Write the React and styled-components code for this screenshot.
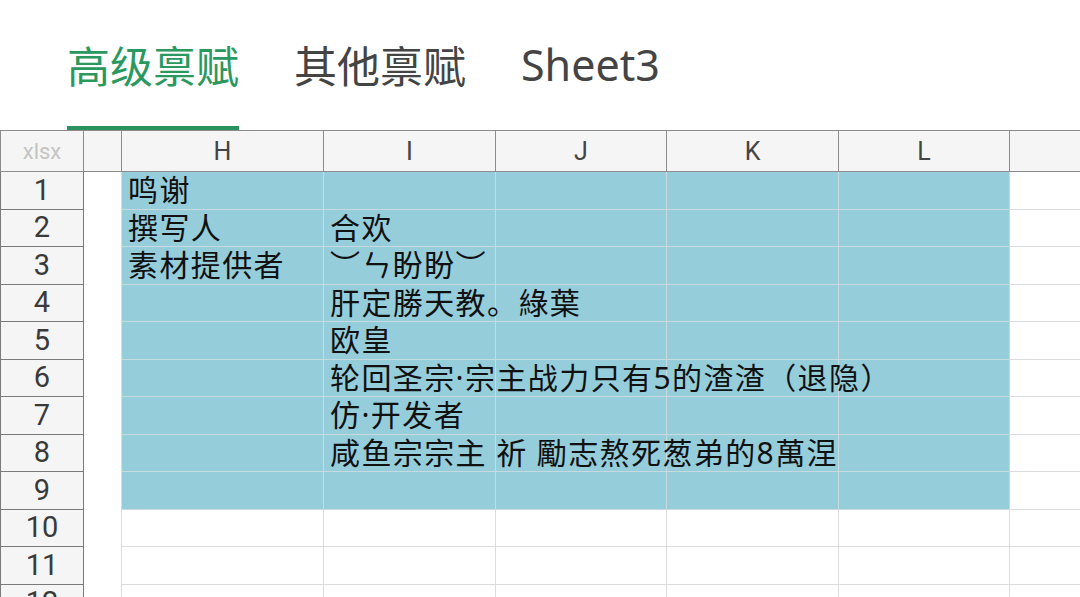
import React from 'react';
import styled, { createGlobalStyle } from 'styled-components';

const GlobalStyle = createGlobalStyle`
  html, body {
    margin: 0;
    padding: 0;
    background: #fff;
    overflow: hidden;
  }
  body {
    font-family: "Noto Sans", "Noto Sans CJK SC", sans-serif;
  }
`;

const tabs = ['高级禀赋', '其他禀赋', 'Sheet3'];

const columns = [
    { key: 'rowhead', width: 83 },
    { key: 'gap', width: 38 },
    { key: 'H', width: 202 },
    { key: 'I', width: 172 },
    { key: 'J', width: 171 },
    { key: 'K', width: 172 },
    { key: 'L', width: 171 },
    { key: 'M', width: 120 },
];

const letters = ['H', 'I', 'J', 'K', 'L'];

// H and I values per row, rows 1-9 are filled
const rows = [
    ['鸣谢', ''],
    ['撰写人', '合欢'],
    ['素材提供者', '︶ㄣ盼盼︶'],
    ['', '肝定勝天教。綠葉'],
    ['', '欧皇'],
    ['', '轮回圣宗·宗主战力只有5的渣渣（退隐）'],
    ['', '仿·开发者'],
    ['', '咸鱼宗宗主 祈 勵志熬死葱弟的8萬涅'],
    ['', ''],
    ['', ''],
    ['', ''],
    ['', ''],
];

const App = () => {
    return (
        <Page>
            <GlobalStyle/>
            <TabBar>
                {tabs.map((t, i) => (
                    <Tab key={t} active={i === 0}>{t}</Tab>
                ))}
            </TabBar>
            <Sheet>
                <colgroup>
                    {columns.map(c => <col key={c.key} style={{width: c.width}}/>)}
                </colgroup>
                <thead>
                <tr>
                    <Corner>xlsx</Corner>
                    <HeadCell/>
                    {letters.map(l => <HeadCell key={l}>{l}</HeadCell>)}
                    <HeadCell/>
                </tr>
                </thead>
                <tbody>
                {rows.map((r, i) => {
                    const filled = i < 9;
                    return (
                        <tr key={i}>
                            <RowHead>{i + 1}</RowHead>
                            <GapCell/>
                            <Cell filled={filled}>{r[0]}</Cell>
                            <Cell filled={filled}>{r[1]}</Cell>
                            <Cell filled={filled}/>
                            <Cell filled={filled}/>
                            <Cell filled={filled}/>
                            <Cell/>
                        </tr>
                    );
                })}
                </tbody>
            </Sheet>
        </Page>
    )
}

const Page = styled.div`
  width: 1080px;
  height: 597px;
  overflow: hidden;
`;

const TabBar = styled.div`
  display: flex;
  gap: 55px;
  height: 130px;
  padding-left: 67px;
  box-sizing: border-box;
`;

const Tab = styled.div`
  display: flex;
  align-items: center;
  padding-top: 2px;
  box-sizing: border-box;
  font-family: "Noto Sans", "Noto Sans CJK SC", sans-serif;
  font-size: 43px;
  color: ${p => p.active ? '#2a9960' : '#444'};
  border-bottom: 4px solid ${p => p.active ? '#2a9160' : 'transparent'};
  white-space: nowrap;
`;

const Sheet = styled.table`
  table-layout: fixed;
  border-collapse: collapse;
  width: 1129px;
  font-family: "Noto Sans", "Noto Sans CJK SC", sans-serif;
`;

const HeadCell = styled.th`
  height: 40px;
  padding: 0;
  background: #f5f5f5;
  border-top: 1px solid #8c8c8c;
  border-bottom: 1px solid #8c8c8c;
  border-right: 1px solid #8c8c8c;
  font-family: Roboto, sans-serif;
  font-weight: 400;
  font-size: 25px;
  color: #444;
  text-align: center;
  vertical-align: middle;
`;

const Corner = styled(HeadCell)`
  border-left: 1px solid #8c8c8c;
  color: #c4c4c4;
  font-size: 22px;
`;

const RowHead = styled.td`
  height: 36.5px;
  padding: 0;
  background: #f5f5f5;
  border: 1px solid #7a7a7a;
  border-top: none;
  font-family: Roboto, sans-serif;
  font-size: 29px;
  color: #3a3a3a;
  text-align: center;
  vertical-align: middle;
  line-height: 1;
`;

const GapCell = styled.td`
  padding: 0;
  background: #fff;
  border-right: 1px solid #dcdcdc;
`;

const Cell = styled.td`
  padding: 0 0 0 6px;
  background: ${p => p.filled ? '#95cddb' : '#fff'};
  border-right: 1px solid ${p => p.filled ? '#c6dadf' : '#dcdcdc'};
  border-bottom: 1px solid ${p => p.filled ? '#c6dadf' : '#dcdcdc'};
  font-size: 30px;
  letter-spacing: 1.4px;
  color: #111;
  white-space: nowrap;
  overflow: visible;
  vertical-align: middle;
  line-height: 1;
`;

export default App;
